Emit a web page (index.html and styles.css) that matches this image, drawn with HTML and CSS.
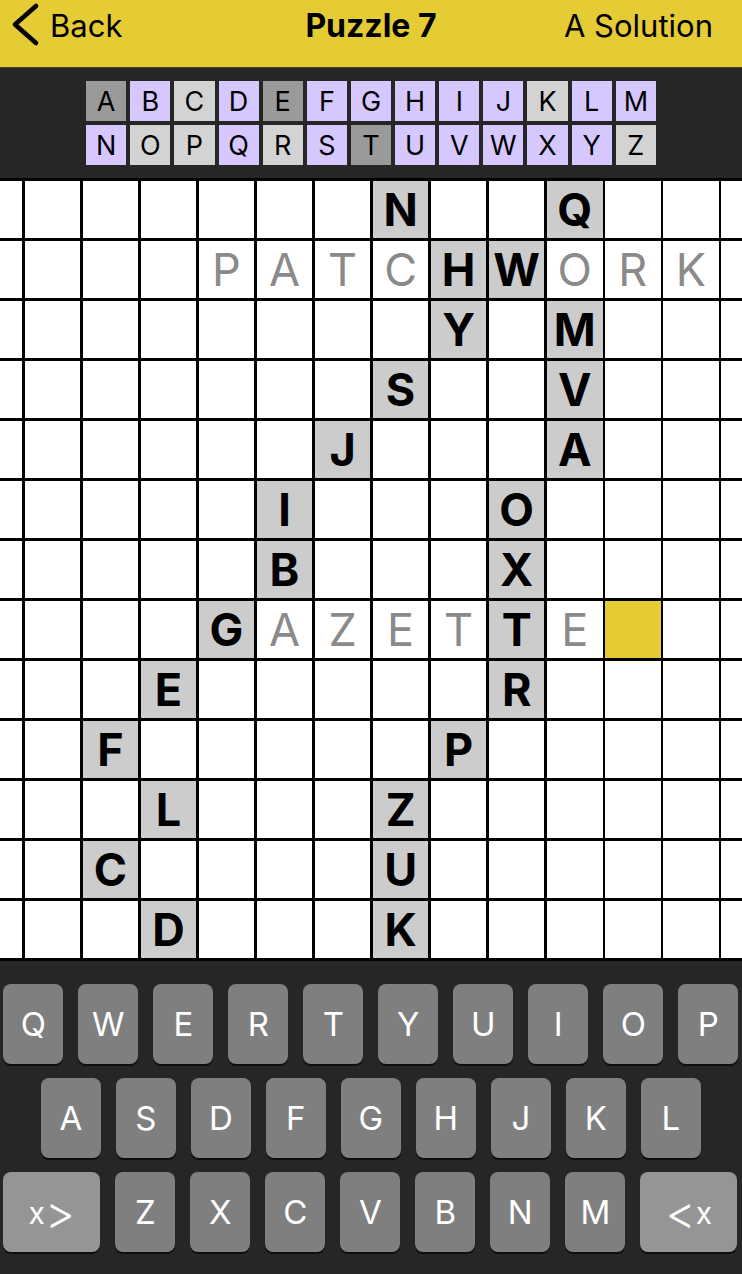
FILE: index.html
```html
<!DOCTYPE html>
<html lang="en">
<head>
<meta charset="utf-8">
<title>Puzzle 7</title>
<link rel="stylesheet" href="styles.css">
</head>
<body>
<header class="nav">
  <div class="back">
    <svg class="chev" width="30" height="46" viewBox="0 0 30 46"><path d="M26 5 L5 23.5 L26 42" fill="none" stroke="#000" stroke-width="4.6" stroke-linecap="round" stroke-linejoin="round"/></svg>
    <span>Back</span>
  </div>
  <div class="title">Puzzle 7</div>
  <div class="solution">A Solution</div>
</header>

<section class="letters">
  <div class="lrow">
    <div class="tile d">A</div><div class="tile p">B</div><div class="tile l">C</div><div class="tile p">D</div><div class="tile d">E</div><div class="tile p">F</div><div class="tile p">G</div><div class="tile p">H</div><div class="tile p">I</div><div class="tile p">J</div><div class="tile l">K</div><div class="tile p">L</div><div class="tile p">M</div>
  </div>
  <div class="lrow">
    <div class="tile p">N</div><div class="tile l">O</div><div class="tile l">P</div><div class="tile p">Q</div><div class="tile l">R</div><div class="tile p">S</div><div class="tile d">T</div><div class="tile p">U</div><div class="tile p">V</div><div class="tile p">W</div><div class="tile p">X</div><div class="tile p">Y</div><div class="tile l">Z</div>
  </div>
</section>

<section class="board">
  <div class="grid">
    <!-- row 0 -->
    <div class="c"></div><div class="c"></div><div class="c"></div><div class="c"></div><div class="c"></div><div class="c"></div><div class="c"></div><div class="c g">N</div><div class="c"></div><div class="c"></div><div class="c g">Q</div><div class="c"></div><div class="c"></div><div class="c"></div>
    <!-- row 1 -->
    <div class="c"></div><div class="c"></div><div class="c"></div><div class="c"></div><div class="c t">P</div><div class="c t">A</div><div class="c t">T</div><div class="c t">C</div><div class="c g">H</div><div class="c g">W</div><div class="c t">O</div><div class="c t">R</div><div class="c t">K</div><div class="c"></div>
    <!-- row 2 -->
    <div class="c"></div><div class="c"></div><div class="c"></div><div class="c"></div><div class="c"></div><div class="c"></div><div class="c"></div><div class="c"></div><div class="c g">Y</div><div class="c"></div><div class="c g">M</div><div class="c"></div><div class="c"></div><div class="c"></div>
    <!-- row 3 -->
    <div class="c"></div><div class="c"></div><div class="c"></div><div class="c"></div><div class="c"></div><div class="c"></div><div class="c"></div><div class="c g">S</div><div class="c"></div><div class="c"></div><div class="c g">V</div><div class="c"></div><div class="c"></div><div class="c"></div>
    <!-- row 4 -->
    <div class="c"></div><div class="c"></div><div class="c"></div><div class="c"></div><div class="c"></div><div class="c"></div><div class="c g">J</div><div class="c"></div><div class="c"></div><div class="c"></div><div class="c g">A</div><div class="c"></div><div class="c"></div><div class="c"></div>
    <!-- row 5 -->
    <div class="c"></div><div class="c"></div><div class="c"></div><div class="c"></div><div class="c"></div><div class="c g">I</div><div class="c"></div><div class="c"></div><div class="c"></div><div class="c g">O</div><div class="c"></div><div class="c"></div><div class="c"></div><div class="c"></div>
    <!-- row 6 -->
    <div class="c"></div><div class="c"></div><div class="c"></div><div class="c"></div><div class="c"></div><div class="c g">B</div><div class="c"></div><div class="c"></div><div class="c"></div><div class="c g">X</div><div class="c"></div><div class="c"></div><div class="c"></div><div class="c"></div>
    <!-- row 7 -->
    <div class="c"></div><div class="c"></div><div class="c"></div><div class="c"></div><div class="c g">G</div><div class="c t">A</div><div class="c t">Z</div><div class="c t">E</div><div class="c t">T</div><div class="c g">T</div><div class="c t">E</div><div class="c y"></div><div class="c"></div><div class="c"></div>
    <!-- row 8 -->
    <div class="c"></div><div class="c"></div><div class="c"></div><div class="c g">E</div><div class="c"></div><div class="c"></div><div class="c"></div><div class="c"></div><div class="c"></div><div class="c g">R</div><div class="c"></div><div class="c"></div><div class="c"></div><div class="c"></div>
    <!-- row 9 -->
    <div class="c"></div><div class="c"></div><div class="c g">F</div><div class="c"></div><div class="c"></div><div class="c"></div><div class="c"></div><div class="c"></div><div class="c g">P</div><div class="c"></div><div class="c"></div><div class="c"></div><div class="c"></div><div class="c"></div>
    <!-- row 10 -->
    <div class="c"></div><div class="c"></div><div class="c"></div><div class="c g">L</div><div class="c"></div><div class="c"></div><div class="c"></div><div class="c g">Z</div><div class="c"></div><div class="c"></div><div class="c"></div><div class="c"></div><div class="c"></div><div class="c"></div>
    <!-- row 11 -->
    <div class="c"></div><div class="c"></div><div class="c g">C</div><div class="c"></div><div class="c"></div><div class="c"></div><div class="c"></div><div class="c g">U</div><div class="c"></div><div class="c"></div><div class="c"></div><div class="c"></div><div class="c"></div><div class="c"></div>
    <!-- row 12 -->
    <div class="c"></div><div class="c"></div><div class="c"></div><div class="c g">D</div><div class="c"></div><div class="c"></div><div class="c"></div><div class="c g">K</div><div class="c"></div><div class="c"></div><div class="c"></div><div class="c"></div><div class="c"></div><div class="c"></div>
  </div>
</section>

<section class="kb">
  <div class="krow">
    <div class="key">Q</div><div class="key">W</div><div class="key">E</div><div class="key">R</div><div class="key">T</div><div class="key">Y</div><div class="key">U</div><div class="key">I</div><div class="key">O</div><div class="key">P</div>
  </div>
  <div class="krow r2">
    <div class="key">A</div><div class="key">S</div><div class="key">D</div><div class="key">F</div><div class="key">G</div><div class="key">H</div><div class="key">J</div><div class="key">K</div><div class="key">L</div>
  </div>
  <div class="krow">
    <div class="key wide"><span class="sm">x</span><span class="big">&gt;</span></div>
    <div class="key">Z</div><div class="key">X</div><div class="key">C</div><div class="key">V</div><div class="key">B</div><div class="key">N</div><div class="key">M</div>
    <div class="key wide"><span class="big">&lt;</span><span class="sm">x</span></div>
  </div>
</section>
</body>
</html>
```

FILE: styles.css
```css
* { box-sizing: border-box; }
html, body { margin: 0; padding: 0; }
body {
  width: 742px;
  height: 1274px;
  overflow: hidden;
  background: #262626;
  font-family: Inter, "Noto Sans", "Liberation Sans", sans-serif;
}

/* navigation bar */
.nav {
  height: 68px;
  background: #e5cb34;
  border-bottom: 1px solid #4a4420;
  display: grid;
  grid-template-columns: 1fr auto 1fr;
  align-items: start;
  padding: 7px 10px 0 10px;
  color: #000;
  font-size: 31px;
  line-height: 38px;
}
.back {
  display: flex;
  align-items: flex-start;
  gap: 10px;
}
.chev { margin-top: -6px; flex: none; }
.title { font-weight: 700; font-size: 32px; }
.solution { justify-self: end; margin-right: 19px; }

/* letter strip */
.letters {
  height: 110px;
  padding-top: 13px;
  display: flex;
  flex-direction: column;
  align-items: center;
  gap: 4px;
}
.lrow {
  display: grid;
  grid-template-columns: repeat(13, 40.15px);
  gap: 4px;
}
.tile {
  height: 40px;
  display: flex;
  align-items: center;
  justify-content: center;
  font-size: 27px;
  line-height: 1;
  color: #000;
}
.p { background: #d6c8ff; }
.l { background: #d3d3d3; }
.d { background: #9a9a9a; }

/* board */
.board {
  background: #000;
  padding: 3px 0;
  overflow: hidden;
}
.grid {
  display: grid;
  grid-template-columns: repeat(14, 55.56px);
  grid-auto-rows: 57px;
  column-gap: 2.5px;
  row-gap: 3px;
  width: 810.34px;
  margin-left: -33.5px;
}
.c {
  background: #fff;
  display: flex;
  align-items: center;
  justify-content: center;
  font-size: 45px;
  line-height: 1;
}
.g { background: #cccccc; font-weight: 700; color: #000; }
.t { color: #8a8a8a; font-weight: 400; }
.y { background: #e5cb34; }

/* keyboard */
.kb {
  height: 313px;
  padding-top: 23px;
  display: flex;
  flex-direction: column;
  gap: 14px;
  background: #262626;
}
.krow {
  display: flex;
  gap: 15px;
  padding-left: 3.3px;
}
.krow.r2 { padding-left: 40.8px; }
.key {
  width: 60px;
  height: 80px;
  flex: none;
  border-radius: 8px;
  background: #7f7f7f;
  box-shadow: 0 2px 0 #0e0e0e;
  color: #fff;
  font-size: 33px;
  line-height: 1;
  display: flex;
  align-items: center;
  justify-content: center;
}
.key.wide { width: 97px; background: #959595; }
.sm { font-size: 30px; margin-top: 2px; }
.big { font-size: 46px; font-weight: 300; }
```
